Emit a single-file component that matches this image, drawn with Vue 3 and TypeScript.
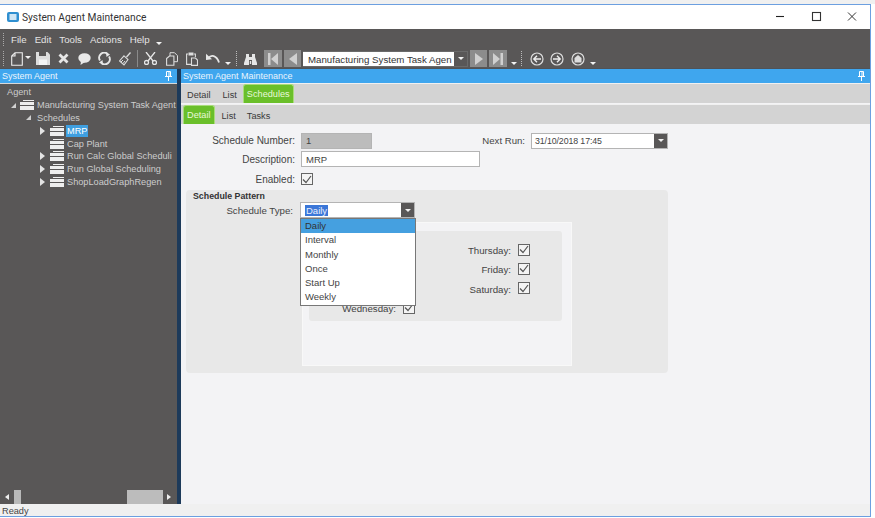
<template>
  <div class="desk">
    <div class="win">
      <div class="titlebar">
        <svg class="app-ico" width="12" height="10" viewBox="0 0 12 10"><rect width="12" height="10" rx="2" fill="#2f8fd0"/><rect x="2.5" y="2" width="7" height="6" fill="#cfe6f5"/></svg>
        <span class="title">System Agent Maintenance</span>
        <div class="winbtns">
          <svg width="36" height="24" viewBox="0 0 36 24"><path d="M14 11.5h8" stroke="#222" stroke-width="1.1"/></svg>
          <svg width="36" height="24" viewBox="0 0 36 24"><rect x="14.5" y="7.5" width="8" height="8" fill="none" stroke="#333" stroke-width="1.1"/></svg>
          <svg width="36" height="24" viewBox="0 0 36 24"><path d="M14 7.5l8 8M22 7.5l-8 8" stroke="#333" stroke-width="1"/></svg>
        </div>
      </div>

      <div class="menubar">
        <i class="grip"></i>
        <span v-for="m in menus" :key="m" class="menu-item">{{ m }}</span>
        <i class="drop-mini menu-drop"></i>
      </div>

      <div class="toolbar">
        <i class="grip grip-tall"></i>
        <svg class="ic ic-new" width="12" height="14" viewBox="0 0 12 14"><path d="M4 .7h7.3v12.6H.7V4zM4 .7V4H.7" fill="none" stroke="#eee" stroke-width="1.1"/></svg>
        <i class="drop-mini new-drop"></i>
        <svg class="ic ic-save" width="14" height="13" viewBox="0 0 14 13"><path d="M0 0h11.5L14 2.5V13H0z" fill="#ddd"/><rect x="3" y="0" width="7" height="4" fill="#595757"/><rect x="3" y="7.5" width="8" height="5.5" fill="#f4f4f4"/></svg>
        <svg class="ic ic-x" width="11" height="11" viewBox="0 0 11 11"><path d="M1.5 1.5l8 8M9.5 1.5l-8 8" stroke="#e6e6e6" stroke-width="2.8"/></svg>
        <svg class="ic ic-chat" width="13" height="12" viewBox="0 0 13 12"><ellipse cx="6.5" cy="5" rx="6.2" ry="4.8" fill="#e8e8e8"/><path d="M3 8l-.5 4L7 9z" fill="#e8e8e8"/></svg>
        <svg class="ic ic-sync" width="13" height="13" viewBox="0 0 13 13"><path d="M2 8.5A5 5 0 0 1 9.5 2M11 4.5A5 5 0 0 1 3.5 11" fill="none" stroke="#e6e6e6" stroke-width="2"/><path d="M8 0l4 2.5L8.5 5zM5 13L1 10.5 4.5 8z" fill="#e6e6e6"/></svg>
        <svg class="ic ic-brush" width="12" height="14" viewBox="0 0 12 14"><path d="M11.5.5L7.5 5" stroke="#ddd" stroke-width="1.3"/><path d="M5 3.8L9 7.5 5 13 .5 9z" fill="none" stroke="#ddd" stroke-width="1.1"/><path d="M2 10l2-2M4 11.5l2-2.5" stroke="#ddd"/></svg>
        <i class="sep"></i>
        <svg class="ic ic-cut" width="13" height="13" viewBox="0 0 13 13"><circle cx="2.5" cy="10.5" r="2" fill="none" stroke="#e6e6e6" stroke-width="1.3"/><circle cx="10.5" cy="10.5" r="2" fill="none" stroke="#e6e6e6" stroke-width="1.3"/><path d="M4 9L11 0M9 9L2 0" stroke="#e6e6e6" stroke-width="1.3"/></svg>
        <svg class="ic ic-copy" width="12" height="14" viewBox="0 0 12 14"><path d="M4 4V.7h4.5l3 3v6H8" fill="none" stroke="#ddd"/><path d="M.6 6.5L3.5 4h4.4v9.3H.6z" fill="none" stroke="#ddd" stroke-width="1.1"/></svg>
        <svg class="ic ic-paste" width="12" height="14" viewBox="0 0 12 14"><path d="M2 2H.6v10.4H5M8 2h1.4v3" fill="none" stroke="#ddd" stroke-width="1.1"/><rect x="2.5" y=".5" width="5" height="3" fill="#ddd"/><path d="M5.5 6h4l2 2v5.4h-6z" fill="none" stroke="#ddd" stroke-width="1.1"/></svg>
        <svg class="ic ic-undo" width="14" height="11" viewBox="0 0 14 11"><path d="M2.5 5C5 1.5 10.5 2 13 9.5" fill="none" stroke="#e6e6e6" stroke-width="1.8"/><path d="M0 .8l6 5.4-6 .8z" fill="#e6e6e6"/></svg>
        <i class="drop-mini undo-drop"></i>
        <i class="sep sep-dash"></i>
        <svg class="ic ic-bino" width="13" height="12" viewBox="0 0 13 12"><path d="M2 1h3v3h3V1h3v3l2 6v2H8V7H5v5H0v-2l2-6z" fill="#e6e6e6"/><path d="M5.8 8h1.4v3H5.8z" fill="#e6e6e6"/></svg>
        <button type="button" class="nav-btn first"><svg width="10" height="12" viewBox="0 0 10 12"><rect width="2.5" height="12" fill="#d0d0d0"/><path d="M10 0v12L3 6z" fill="#d0d0d0"/></svg></button>
        <button type="button" class="nav-btn prev"><svg width="8" height="12" viewBox="0 0 8 12"><path d="M8 0v12L0 6z" fill="#d0d0d0"/></svg></button>
        <div class="tool-combo">
          <span class="tool-combo-text">Manufacturing System Task Agen</span>
          <span class="tool-combo-arrow"><i class="drop-mini"></i></span>
        </div>
        <button type="button" class="nav-btn next"><svg width="8" height="12" viewBox="0 0 8 12"><path d="M0 0v12l8-6z" fill="#d0d0d0"/></svg></button>
        <button type="button" class="nav-btn last"><svg width="10" height="12" viewBox="0 0 10 12"><path d="M0 0v12l7-6z" fill="#d0d0d0"/><rect x="7.5" width="2.5" height="12" fill="#d0d0d0"/></svg></button>
        <i class="drop-mini last-drop"></i>
        <i class="sep sep-dash sep-b"></i>
        <svg class="ic ic-back" width="14" height="14" viewBox="0 0 14 14"><circle cx="7" cy="7" r="6" fill="none" stroke="#ddd" stroke-width="1.2"/><path d="M11 7H4M7 3.8L3.8 7 7 10.2" fill="none" stroke="#eee" stroke-width="1.4"/></svg>
        <svg class="ic ic-fwd" width="14" height="14" viewBox="0 0 14 14"><circle cx="7" cy="7" r="6" fill="none" stroke="#ddd" stroke-width="1.2"/><path d="M3 7h7M7 3.8L10.2 7 7 10.2" fill="none" stroke="#eee" stroke-width="1.4"/></svg>
        <svg class="ic ic-home" width="14" height="14" viewBox="0 0 14 14"><circle cx="7" cy="7" r="6" fill="none" stroke="#ddd" stroke-width="1.2"/><path d="M7 3l3.5 3v4.5h-7V6z" fill="#ddd"/></svg>
        <i class="drop-mini end-drop"></i>
      </div>

      <div class="workspace">
        <aside class="side">
          <div class="pane-head">
            <span>System Agent</span>
            <svg class="pin" width="7" height="10" viewBox="0 0 7 10"><path d="M1.5.5h4v5h-4zM0 5.5h7M3.5 5.5V10M4 1v4" fill="none" stroke="#fff"/></svg>
          </div>
          <div class="tree">
            <div class="tree-root">Agent</div>
            <div v-for="n in tree" :key="n.label" class="tree-row" :class="'lvl' + n.level">
              <i class="twist" :class="n.twist"></i>
              <svg v-if="n.folder" class="folder" width="14" height="10" viewBox="0 0 14 10"><path d="M3 0h11v1H3zM0 2h14v3H0zM0 6h14v4H0z" fill="#eee"/></svg>
              <span class="tree-label" :class="{ picked: n.picked }">{{ n.label }}</span>
            </div>
          </div>
          <div class="side-scroll">
            <i class="arr-l"></i>
            <i class="thumb-a"></i>
            <i class="thumb-b"></i>
            <i class="arr-r"></i>
          </div>
        </aside>
        <div class="splitter"></div>
        <main class="main">
          <div class="pane-head">
            <span>System Agent Maintenance</span>
            <svg class="pin" width="7" height="10" viewBox="0 0 7 10"><path d="M1.5.5h4v5h-4zM0 5.5h7M3.5 5.5V10M4 1v4" fill="none" stroke="#fff"/></svg>
          </div>
          <div class="tabs tabs-top">
            <span class="tab">Detail</span>
            <span class="tab">List</span>
            <span class="tab on">Schedules</span>
          </div>
          <div class="tabs tabs-sub">
            <span class="tab on">Detail</span>
            <span class="tab">List</span>
            <span class="tab">Tasks</span>
          </div>
          <div class="form">
            <div class="row row-num">
              <label class="lbl">Schedule Number:</label>
              <span class="field field-num">1</span>
              <label class="lbl lbl-next">Next Run:</label>
              <span class="field field-date">31/10/2018 17:45<span class="combo-btn"><i class="drop-mini"></i></span></span>
            </div>
            <div class="row row-desc">
              <label class="lbl">Description:</label>
              <span class="field field-desc">MRP</span>
            </div>
            <div class="row row-en">
              <label class="lbl">Enabled:</label>
              <span class="check"><svg width="10" height="9" viewBox="0 0 10 9"><path d="M1 4.5l3 3L9 1" fill="none" stroke="#555" stroke-width="1.2"/></svg></span>
            </div>
            <section class="pattern">
              <h4>Schedule Pattern</h4>
              <div class="row row-type">
                <label class="lbl lbl-type">Schedule Type:</label>
                <span class="field field-type"><span class="sel">Daily</span><span class="combo-btn focus"><i class="drop-mini"></i></span></span>
              </div>
              <div class="inner">
                <div class="days">
                  <div v-for="d in days" :key="d" class="day">
                    <span>{{ d }}:</span>
                    <span class="check"><svg width="10" height="9" viewBox="0 0 10 9"><path d="M1 4.5l3 3L9 1" fill="none" stroke="#555" stroke-width="1.2"/></svg></span>
                  </div>
                </div>
              </div>
              <ul class="dropdown">
                <li v-for="(o, i) in types" :key="o" :class="{ active: i === 0 }">{{ o }}</li>
              </ul>
            </section>
          </div>
        </main>
      </div>
      <div class="status">Ready</div>
    </div>
  </div>
</template>

<script setup lang="ts">
const menus = ['File', 'Edit', 'Tools', 'Actions', 'Help']

const tree = [
  { label: 'Manufacturing System Task Agent', level: 1, twist: 'open', folder: true },
  { label: 'Schedules', level: 2, twist: 'open', folder: false },
  { label: 'MRP', level: 3, twist: 'closed', folder: true, picked: true },
  { label: 'Cap Plant', level: 3, twist: 'none', folder: true },
  { label: 'Run Calc Global Scheduli', level: 3, twist: 'closed', folder: true },
  { label: 'Run Global Scheduling', level: 3, twist: 'closed', folder: true },
  { label: 'ShopLoadGraphRegen', level: 3, twist: 'closed', folder: true }
]

const days = ['Sunday', 'Thursday', 'Monday', 'Friday', 'Tuesday', 'Saturday', 'Wednesday']
const types = ['Daily', 'Interval', 'Monthly', 'Once', 'Start Up', 'Weekly']
</script>

<style>
html, body { margin: 0; background: #fff; overflow: hidden; }
</style>

<style scoped>
.desk {
  width: 875px;
  height: 518px;
  padding-top: 4px;
  box-sizing: border-box;
  background: linear-gradient(#f0f0f0 0 4px, #fff 4px);
  font-family: "Liberation Sans", Arial, sans-serif;
  font-size: 10px;
  color: #3a3a3a;
}
.win {
  width: 871px;
  height: 513px;
  box-sizing: border-box;
  border-top: 1px solid #6c9fe0;
  border-right: 1px solid #6c9fe0;
  border-bottom: 1px solid #6c9fe0;
  display: flex;
  flex-direction: column;
  background: #f3f3f5;
}
.titlebar {
  height: 24px;
  background: #fff;
  display: flex;
  align-items: center;
  flex: none;
}
.app-ico { margin-left: 7px; }
.title { margin-left: 3px; font-family: Roboto, "Liberation Sans", sans-serif; font-size: 10.2px; color: #333; }
.winbtns { margin-left: auto; display: flex; }

.menubar {
  height: 19px;
  background: #595757;
  display: flex;
  align-items: center;
  color: #e4e4e4;
  flex: none;
  box-sizing: border-box;
  padding-top: 1px;
}
.grip {
  width: 1px;
  height: 13px;
  margin-left: 3px;
  border-left: 1px dotted #aaa;
  flex: none;
}
.menu-item { margin-left: 8px; font-size: 9.7px; }
.menu-item:first-of-type { margin-left: 6px; }
.menu-drop { margin-left: 6px; margin-top: 9px; }
.drop-mini {
  display: inline-block;
  width: 0;
  height: 0;
  flex: none;
  border-left: 3px solid transparent;
  border-right: 3px solid transparent;
  border-top: 3px solid #f2f2f2;
}

.toolbar {
  height: 21px;
  background: #595757;
  display: flex;
  align-items: center;
  border-bottom: 1px solid #4f5358;
  flex: none;
  color: #e4e4e4;
  box-sizing: border-box;
  padding-top: 1px;
}
.grip-tall { height: 15px; }
.ic { flex: none; }
.ic-new { margin-left: 6px; }
.new-drop { margin-left: 2px; margin-bottom: 3px; }
.ic-save { margin-left: 5px; }
.ic-x { margin-left: 8px; }
.ic-chat { margin-left: 9px; }
.ic-sync { margin-left: 7px; }
.ic-brush { margin-left: 8px; }
.sep { width: 1px; height: 17px; background: #8a8a8a; margin-left: 6px; flex: none; }
.ic-cut { margin-left: 6px; }
.ic-copy { margin-left: 9px; }
.ic-paste { margin-left: 8px; }
.ic-undo { margin-left: 8px; }
.undo-drop { margin-left: 5px; margin-top: 10px; }
.sep-dash { background: none; border-left: 1px dotted #bbb; margin-left: 5px; width: 0; height: 15px; }
.ic-bino { margin-left: 7px; }
.nav-btn {
  width: 18px;
  height: 17px;
  padding: 0;
  border: 0;
  background: #8c8c8c;
  display: flex;
  align-items: center;
  justify-content: center;
  flex: none;
}
.first { margin-left: 7px; }
.prev { margin-left: 2px; width: 17px; }
.tool-combo {
  margin-left: 2px;
  width: 165px;
  height: 16px;
  display: flex;
  flex: none;
  box-sizing: border-box;
  background: #fff;
  border: 1px solid #6a6a6a;
  border-left: 0;
}
.tool-combo-text {
  flex: 1;
  overflow: hidden;
  white-space: nowrap;
  font-size: 9.7px;
  line-height: 15px;
  padding-left: 5px;
  color: #333;
}
.tool-combo-arrow {
  width: 13px;
  background: #595757;
  display: flex;
  align-items: center;
  justify-content: center;
}
.next { margin-left: 2px; width: 17px; }
.last { margin-left: 2px; }
.last-drop { margin-left: 4px; margin-top: 10px; }
.sep-b { margin-left: 4px; }
.ic-back { margin-left: 8px; }
.ic-fwd { margin-left: 6px; }
.ic-home { margin-left: 7px; }
.end-drop { margin-left: 5px; margin-top: 10px; }

.workspace { flex: 1; display: flex; min-height: 0; }
.pane-head {
  height: 14px;
  background: #3fa6ee;
  color: #eaf5fd;
  font-size: 9px;
  line-height: 14px;
  display: flex;
  justify-content: space-between;
  align-items: center;
  padding: 0 4px 0 2px;
  flex: none;
}
.pin { margin-right: 1px; }

.side {
  width: 177px;
  background: #595757;
  display: flex;
  flex-direction: column;
  flex: none;
}
.tree { flex: 1; padding-top: 2px; color: #cdcdcd; font-size: 9.2px; border-top: 1px solid #d8d8d8; }
.tree-root { height: 12.8px; line-height: 12.8px; padding-left: 7px; }
.tree-row { height: 12.8px; display: flex; align-items: center; white-space: nowrap; }
.lvl1 { padding-left: 11px; }
.lvl2 { padding-left: 26px; }
.lvl3 { padding-left: 40px; }
.twist { flex: none; }
.twist.open {
  width: 0;
  height: 0;
  border-bottom: 5px solid #d0d0d0;
  border-left: 5px solid transparent;
  margin-right: 4px;
}
.lvl2 .twist.open { margin-right: 6px; }
.twist.closed {
  width: 0;
  height: 0;
  border-left: 5px solid #e4e4e4;
  border-top: 4px solid transparent;
  border-bottom: 4px solid transparent;
  margin-right: 5px;
}
.twist.none { width: 5px; height: 0; margin-right: 5px; }
.folder { flex: none; }
.lvl1 .folder { margin-right: 3px; }
.lvl3 .folder { margin-right: 2px; }
.lvl3 .tree-label { padding: 0 1px; }
.picked { background: #3f9fe0; color: #fff; line-height: 12px; }
.side-scroll {
  height: 15px;
  display: flex;
  align-items: center;
  flex: none;
}
.arr-l, .arr-r { width: 0; height: 0; border-top: 3px solid transparent; border-bottom: 3px solid transparent; }
.arr-l { border-right: 4px solid #eee; margin-left: 5px; }
.arr-r { border-left: 4px solid #eee; margin-left: 4px; }
.thumb-a { width: 7px; height: 14px; background: #b9b9b9; margin-left: 5px; }
.thumb-b { width: 36px; height: 14px; background: #bcbcbc; margin-left: 106px; }

.splitter { width: 4px; background: #1d3a5a; flex: none; }
.main { flex: 1; display: flex; flex-direction: column; min-width: 0; }
.tabs {
  height: 20px;
  box-sizing: border-box;
  background: #d3d3d3;
  border-top: 1px solid #f0f0f0;
  display: flex;
  align-items: center;
  flex: none;
  font-size: 9.2px;
  color: #3a3a3a;
}
.tabs-top { padding-left: 1px; }
.tabs-sub { margin-top: 1px; padding-left: 2px; }
.tab { padding: 0 6px; line-height: 18px; margin-top: 2px; }
.tabs-top .tab { margin-top: 3px; }
.tabs-top .tab:first-child { padding-left: 5px; }
.tabs-sub .tab:nth-child(2) { padding-left: 7px; padding-right: 11px; }
.tabs-sub .tab:nth-child(3) { padding-left: 0; }
.tabs-top .tab:nth-child(2) { padding-left: 6px; padding-right: 6px; }
.tabs .tab.on {
  background: #6abf2a;
  color: #e8f8d8;
  border: 1px solid #a9dc7a;
  border-bottom: 0;
  border-radius: 3px 3px 0 0;
  line-height: 18px;
  padding: 0 3px;
  margin-top: 0;
  align-self: stretch;
}

.form { flex: 1; padding: 8px 0 0 5px; position: relative; font-size: 9.5px; }
.row { display: flex; align-items: center; }
.lbl { width: 109px; text-align: right; margin-right: 6px; flex: none; color: #444; font-size: 10px; }
.field {
  height: 16px;
  box-sizing: border-box;
  border: 1px solid #b4b4b4;
  background: #fff;
  display: flex;
  align-items: center;
  padding-left: 4px;
  flex: none;
  color: #444;
}
.row-num { height: 17px; }
.field-num { width: 71px; background: #bcbcbc; }
.lbl-next { margin-left: 80px; margin-right: 6px; width: 73px; font-size: 9.6px; }
.field-date { width: 137px; position: relative; font-size: 8.8px; letter-spacing: -0.1px; padding-left: 3px; }
.combo-btn {
  position: absolute;
  right: 0;
  top: 0;
  width: 13px;
  height: 14px;
  background: #595757;
  display: flex;
  align-items: center;
  justify-content: center;
}
.row-desc { height: 16px; margin-top: 2px; }
.field-desc { width: 179px; }
.row-en { height: 16px; margin-top: 4px; }
.check {
  width: 12px;
  height: 12px;
  box-sizing: border-box;
  border: 1px solid #666;
  background: #f4f4f4;
  display: flex;
  align-items: center;
  justify-content: center;
  flex: none;
}
.pattern {
  width: 482px;
  height: 183px;
  margin-top: 3px;
  background: #e8e8e8;
  border-radius: 4px;
  position: relative;
  box-sizing: border-box;
  padding-top: 1px;
}
.pattern h4 { margin: 0 0 0 7px; font-size: 8.8px; line-height: 11px; color: #333; }
.row-type { height: 16px; }
.lbl-type { width: 107px; margin-right: 7px; font-size: 9.7px; }
.field-type { width: 115px; position: relative; }
.field-type .sel { background: #3b77d8; color: #e8eefc; padding: 0 1px; line-height: 11px; }
.inner {
  position: absolute;
  left: 116px;
  top: 32px;
  width: 270px;
  height: 144px;
  box-sizing: border-box;
  background: #f3f3f5;
  border: 1px solid #f8f8f8;
  padding: 8px 0 0 6px;
}
.days {
  width: 253px;
  height: 90px;
  background: #e8e8e8;
  border-radius: 3px;
  display: grid;
  grid-template-columns: 106px 115px;
  grid-auto-rows: 19.3px;
  padding-top: 10px;
  box-sizing: border-box;
}
.day { display: flex; align-items: center; justify-content: flex-end; gap: 7px; color: #444; font-size: 9.7px; }
.day .check { margin-top: -2px; }
.dropdown {
  position: absolute;
  left: 114px;
  top: 28px;
  width: 116px;
  margin: 0;
  padding: 0;
  list-style: none;
  box-sizing: border-box;
  background: #fff;
  border: 1px solid #777;
  z-index: 2;
}
.dropdown li { height: 14.3px; line-height: 13.4px; padding-left: 4px; color: #444; font-size: 9.5px; }
.dropdown li.active { background: #45a0e0; color: #333; }
.status {
  height: 12px;
  background: #f0f0f0;
  font-size: 9.2px;
  line-height: 15px;
  padding-left: 2px;
  color: #444;
  flex: none;
}
</style>
